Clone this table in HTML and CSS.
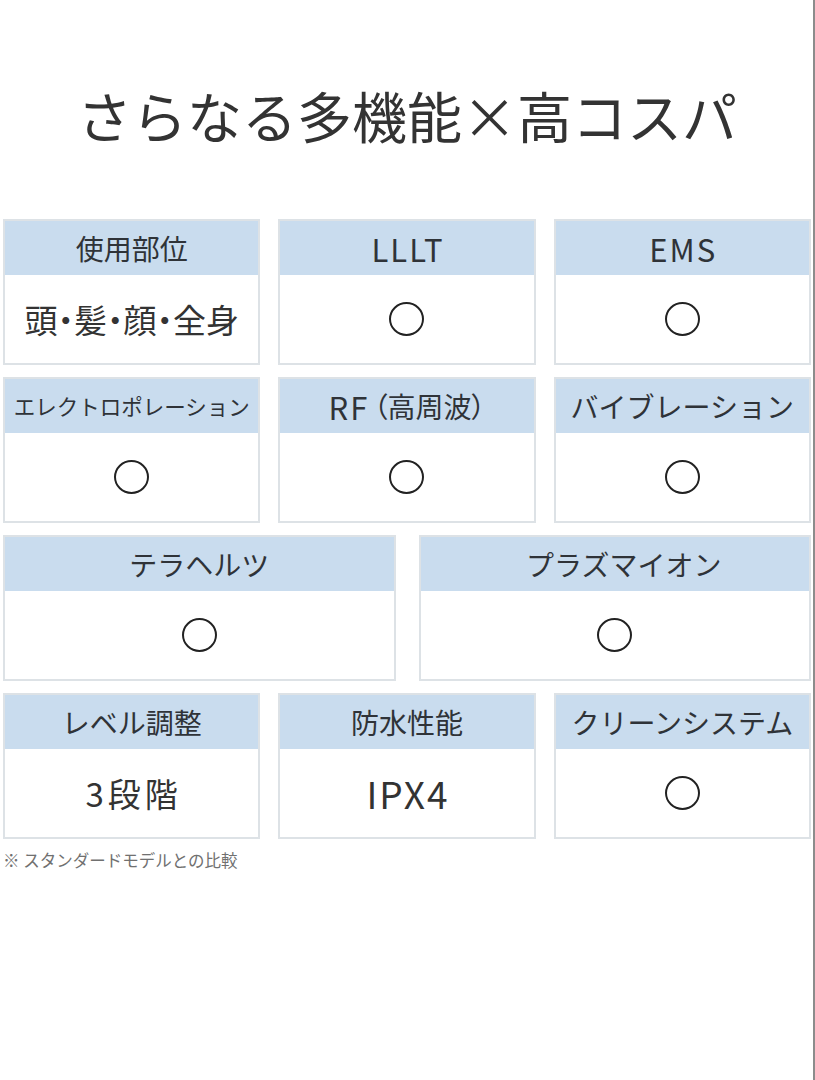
FILE: index.html
```html
<!DOCTYPE html>
<html lang="ja">
<head>
<meta charset="utf-8">
<link rel="stylesheet" href="styles.css">
</head>
<body>
<div class="page">
  <h1 class="title">さらなる多機能×高コスパ</h1>
  <div class="grid three">
    <div class="card"><div class="head">使用部位</div><div class="body"><span class="txt palt">頭・髪・顔・全身</span></div></div>
    <div class="card"><div class="head"><span class="lat">LLLT</span></div><div class="body"><span class="mark"></span></div></div>
    <div class="card"><div class="head"><span class="lat">EMS</span></div><div class="body"><span class="mark"></span></div></div>
  </div>
  <div class="grid three">
    <div class="card"><div class="head small">エレクトロポレーション</div><div class="body"><span class="mark"></span></div></div>
    <div class="card"><div class="head palt"><span class="lat">RF</span>&nbsp;（高周波）</div><div class="body"><span class="mark"></span></div></div>
    <div class="card"><div class="head">バイブレーション</div><div class="body"><span class="mark"></span></div></div>
  </div>
  <div class="grid two">
    <div class="card"><div class="head">テラヘルツ</div><div class="body"><span class="mark"></span></div></div>
    <div class="card"><div class="head shift">プラズマイオン</div><div class="body"><span class="mark"></span></div></div>
  </div>
  <div class="grid three">
    <div class="card"><div class="head">レベル調整</div><div class="body"><span class="txt spaced">3段階</span></div></div>
    <div class="card"><div class="head">防水性能</div><div class="body"><span class="txt latbig">IPX4</span></div></div>
    <div class="card"><div class="head">クリーンシステム</div><div class="body"><span class="mark"></span></div></div>
  </div>
  <p class="note">※ スタンダードモデルとの比較</p>
</div>
</body>
</html>
```

FILE: styles.css
```css
html, body {
  margin: 0;
  padding: 0;
  background: #ffffff;
}
body {
  font-family: "Noto Sans CJK JP", "Noto Sans", sans-serif;
  color: #333333;
}
.page {
  width: 815px;
  min-height: 1080px;
  box-sizing: border-box;
  padding: 0 2px 0 3px;
  border-right: 2px solid #8c8c8c;
}
.title {
  margin: 0;
  height: 219px;
  box-sizing: border-box;
  padding-top: 9px;
  display: flex;
  align-items: center;
  justify-content: center;
  font-size: 55px;
  font-weight: 400;
  line-height: 1;
  color: #333333;
}
.grid {
  display: grid;
  margin-bottom: 12px;
}
.grid.three {
  grid-template-columns: repeat(3, 1fr);
  column-gap: 18px;
}
.grid.two {
  grid-template-columns: repeat(2, 1fr);
  column-gap: 23px;
}
.card {
  border: 2px solid #dde2e6;
  height: 146px;
  box-sizing: border-box;
  display: flex;
  flex-direction: column;
}
.head {
  height: 54px;
  background: #c9dcee;
  display: flex;
  align-items: center;
  justify-content: center;
  font-size: 28px;
  line-height: 1;
  color: #2f3338;
  white-space: nowrap;
}
.head.small {
  font-size: 21.5px;
}
.head.shift {
  padding-left: 18px;
}
.lat {
  font-size: 31px;
  letter-spacing: 2px;
  margin-right: -2px;
}
.palt {
  font-feature-settings: "palt";
}
.body {
  flex: 1;
  display: flex;
  align-items: center;
  justify-content: center;
  background: #ffffff;
}
.txt {
  font-size: 33px;
  line-height: 1;
  color: #333333;
}
.txt.spaced {
  letter-spacing: 4px;
  margin-right: -4px;
}
.txt.latbig {
  font-size: 37px;
  letter-spacing: 2px;
  margin-right: -2px;
}
.mark {
  width: 31px;
  height: 30px;
  border: 2.5px solid #222222;
  border-radius: 50%;
}
.note {
  margin: 11px 0 0;
  font-size: 16.5px;
  line-height: 1.2;
  color: #707070;
}
```
